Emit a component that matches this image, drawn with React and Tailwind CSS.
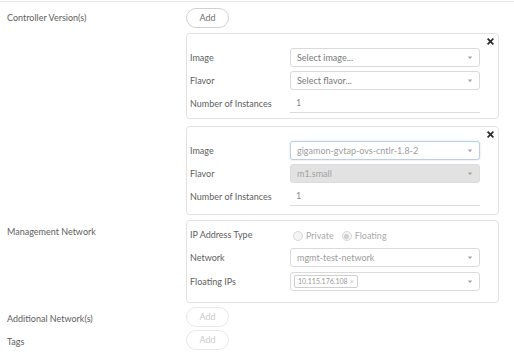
const font = { fontFamily: 'Lato, "Open Sans", sans-serif' };

const Caret = () => (
  <svg width="6" height="4" viewBox="0 0 6 4" className="shrink-0">
    <path d="M0.8 0.6 L5.2 0.6 L3 3.2 Z" fill="#a5a5a5" />
  </svg>
);

const CloseIcon = () => (
  <svg width="7" height="7" viewBox="0 0 7 7" className="absolute right-[4px] top-[4px]">
    <path d="M1.2 1.2 L5.8 5.8 M5.8 1.2 L1.2 5.8" stroke="#2a2a2a" strokeWidth="1.7" strokeLinecap="square" />
  </svg>
);

const AddButton = ({ disabled }) => (
  <button
    type="button"
    className={`flex h-[20px] w-[43px] items-center justify-center rounded-full border text-[9px] ${
      disabled ? 'border-[#e8e8e8] text-[#cacaca]' : 'border-[#d0d0d0] text-[#707070]'
    }`}
  >
    Add
  </button>
);

const Select = ({ value, placeholder, focus, disabled, muted, children }) => (
  <div
    className={`flex h-[19px] w-[190px] items-center justify-between rounded-[3px] border pl-[6px] pr-[6px] text-[9px] ${
      disabled
        ? 'border-[#dcdcdc] bg-[#e2e2e2] text-[#a3a3a3]'
        : focus
          ? 'border-[#bccfe8] bg-white text-[#9d9d9d] shadow-[0_0_2px_#c9daf0]'
          : 'border-[#dadada] bg-white'
    } ${placeholder ? 'text-[#7a7a7a]' : ''} ${muted ? 'text-[#9d9d9d]' : ''}`}
  >
    <div className="flex items-center">{children ?? value ?? placeholder}</div>
    <Caret />
  </div>
);

const Row = ({ label, children }) => (
  <div className="flex h-[19px] items-center">
    <div className="w-[100px] text-[9px] text-[#606060]">{label}</div>
    {children}
  </div>
);

const InstancesInput = () => (
  <div className="flex h-[19px] w-[190px] items-center border-b border-[#dcdcdc] pl-[6px] text-[9px] text-[#8a8a8a]">1</div>
);

const Card = ({ children, close, className = '' }) => (
  <div className={`relative w-[313px] rounded-[4px] border border-[#e2e2e2] pl-[3px] ${className}`}>
    {close ? <CloseIcon /> : null}
    {children}
  </div>
);

const Radio = ({ label, checked }) => (
  <div className="flex items-center gap-[3px]">
    <span className="flex h-[10px] w-[10px] items-center justify-center rounded-full border border-[#d8d8d8] bg-[#f4f4f4]">
      {checked ? <span className="h-[5px] w-[5px] rounded-full bg-[#d0d0d0]" /> : null}
    </span>
    <span className="text-[9px] text-[#aaa]">{label}</span>
  </div>
);

const Section = ({ label, children, labelPad = 'pt-[11px]' }) => (
  <div className="flex">
    <div className={`w-[186px] pl-[7px] text-[9px] text-[#606060] ${labelPad}`}>{label}</div>
    <div className="flex flex-col">{children}</div>
  </div>
);

export default function App() {
  return (
    <div className="h-[354px] w-[514px] overflow-hidden bg-white" style={font}>
      <div className="mt-[1px] border-t border-[#e8e8e8]" />
      <div className="pt-[6px]">
        <Section label="Controller Version(s)" labelPad="pt-[3px]">
          <AddButton />
          <Card close className="mt-[5px] pb-[5px] pt-[14px]">
            <div className="flex flex-col gap-[4px]">
              <Row label="Image">
                <Select placeholder="Select image..." />
              </Row>
              <Row label="Flavor">
                <Select placeholder="Select flavor..." />
              </Row>
              <Row label="Number of Instances">
                <InstancesInput />
              </Row>
            </div>
          </Card>
          <Card close className="mt-[7px] pb-[8px] pt-[14px]">
            <div className="flex flex-col gap-[4px]">
              <Row label="Image">
                <Select value="gigamon-gvtap-ovs-cntlr-1.8-2" focus />
              </Row>
              <Row label="Flavor">
                <Select value="m1.small" disabled />
              </Row>
              <Row label="Number of Instances">
                <InstancesInput />
              </Row>
            </div>
          </Card>
        </Section>
        <div className="mt-[5px]">
          <Section label="Management Network" labelPad="pt-[5px]">
            <Card className="pb-[11px] pt-[6px]">
              <div className="flex flex-col gap-[5px]">
                <div className="flex h-[16px] items-center">
                  <div className="w-[100px] text-[9px] text-[#606060]">IP Address Type</div>
                  <div className="flex items-center gap-[8px] pl-[3px] pt-[2px]">
                    <Radio label="Private" />
                    <Radio label="Floating" checked />
                  </div>
                </div>
                <Row label="Network">
                  <Select value="mgmt-test-network" muted />
                </Row>
                <Row label="Floating IPs">
                  <Select muted>
                    <span className="-ml-[3px] flex h-[13px] items-center rounded-[2px] border border-[#cfcfcf] px-[3px] text-[7px] text-[#9a9a9a]">
                      10.115.176.108 <span className="ml-[2px] text-[#c8c8c8]">×</span>
                    </span>
                  </Select>
                </Row>
              </div>
            </Card>
          </Section>
        </div>
        <div className="mt-[4px] flex flex-col gap-[3px]">
          <Section label="Additional Network(s)" labelPad="pt-[5px]">
            <AddButton disabled />
          </Section>
          <Section label="Tags" labelPad="pt-[5px]">
            <AddButton disabled />
          </Section>
        </div>
      </div>
    </div>
  );
}
